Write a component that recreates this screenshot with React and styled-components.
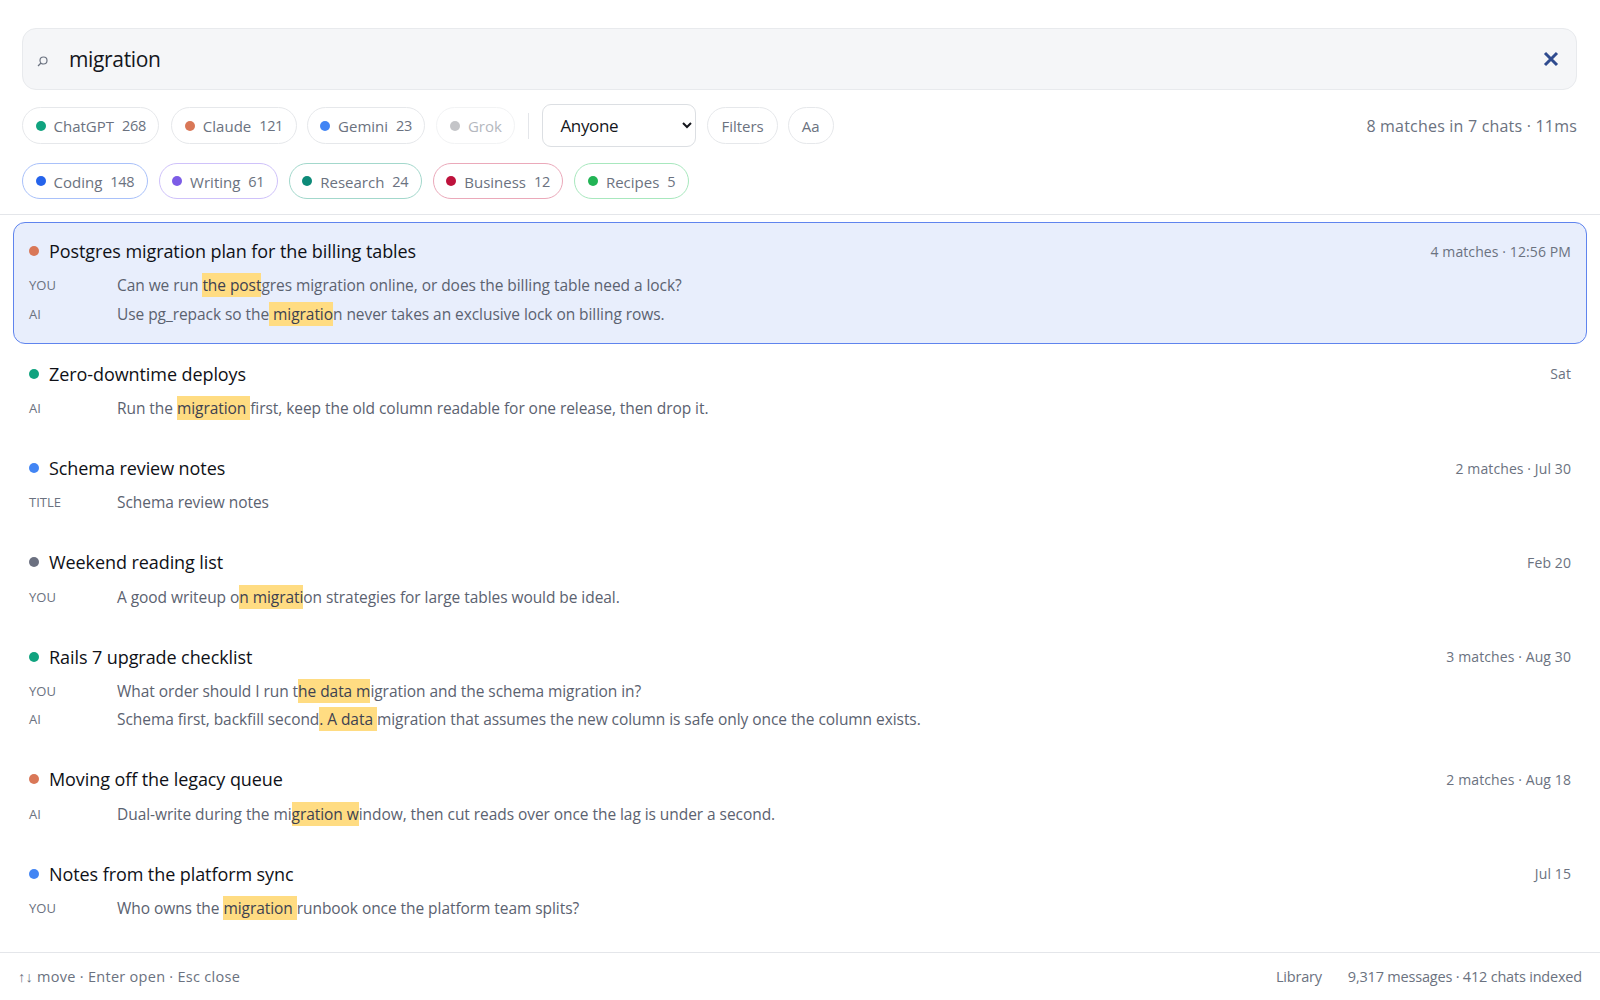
import React from 'react';
import styled, { createGlobalStyle } from 'styled-components';

const Global = createGlobalStyle`
  html, body { margin: 0; padding: 0; background: #fff; }
  body { font-family: "Open Sans", "Noto Sans", sans-serif; color: #14161c; }
`;

const Page = styled.div`
  display: flex;
  flex-direction: column;
  height: 1000px;
`;

const Header = styled.header`
  padding: 28px 23px 15px 22px;
  border-bottom: 1px solid #e4e6ea;
`;

const SearchBar = styled.div`
  display: flex;
  align-items: center;
  height: 62px;
  box-sizing: border-box;
  padding: 0 17px 0 13px;
  background: #f5f6f8;
  border: 1px solid #e8eaed;
  border-radius: 14px;
`;

const SearchInput = styled.input`
  flex: 1;
  margin-left: 17px;
  border: 0;
  outline: 0;
  background: transparent;
  font: 400 21px "Open Sans", sans-serif;
  letter-spacing: -0.35px;
  color: #14161c;
`;

const ClearButton = styled.button`
  display: flex;
  padding: 0;
  border: 0;
  background: none;
`;

const FilterRow = styled.div`
  display: flex;
  align-items: center;
  margin-top: 14px;
  height: 43px;
`;

const TagRow = styled.div`
  display: flex;
  align-items: center;
  gap: 11px;
  margin-top: 16px;
  height: 36px;
`;

const Chip = styled.button`
  display: inline-flex;
  align-items: center;
  height: ${p => (p.$tall ? 36 : 37)}px;
  box-sizing: border-box;
  padding: 0 ${p => (p.$plain ? 13 : 12.5)}px;
  margin-right: ${p => p.$gap ?? 0}px;
  background: #fff;
  border: 1px solid ${p => p.$border || '#e6e8eb'};
  border-radius: 19px;
  font: 400 15px "Open Sans", sans-serif;
  color: #6b7280;
  opacity: ${p => (p.$off ? 0.5 : 1)};
`;

const Dot = styled.span`
  width: 10px;
  height: 10px;
  flex: none;
  border-radius: 50%;
  background: ${p => p.$color};
`;

const ChipLabel = styled.span`
  margin-left: 8px;
  padding-top: ${p => (p.$low ? 2 : 0)}px;
`;

const ChipCount = styled.span`
  margin-left: 8px;
  font-size: 14.5px;
  letter-spacing: -0.35px;
`;

const Separator = styled.span`
  width: 1px;
  height: 26px;
  margin: 0 13px 0 13px;
  background: #e4e6ea;
`;

const Who = styled.select`
  width: 154px;
  height: 43px;
  margin-right: 11px;
  padding: 0 0 0 13px;
  background: #fff;
  border: 1px solid #dcdfe3;
  border-radius: 9px;
  font: 400 17px "Open Sans", sans-serif;
  letter-spacing: -0.35px;
  color: #14161c;
`;

const Stats = styled.span`
  margin-left: auto;
  font-size: 16px;
  letter-spacing: 0.2px;
  color: #6b7280;
`;

const Results = styled.main`
  flex: 1;
  display: flex;
  flex-direction: column;
  gap: 1.8px;
  padding: 7px 13px 0;
`;

const Row = styled.article`
  padding: 15px 15px ${p => (p.$active ? 15 : 14)}px;
  margin-bottom: ${p => (p.$active ? -1 : 0)}px;
  background: ${p => (p.$active ? '#e8eefc' : 'transparent')};
  border: 1px solid ${p => (p.$active ? '#5f84ee' : 'transparent')};
  border-radius: 12px;
`;

const RowHead = styled.div`
  display: flex;
  align-items: center;
  height: 26px;
  margin-bottom: 7px;
`;

const Title = styled.h3`
  margin: 0 0 0 10px;
  font-size: 18px;
  font-weight: 500;
  letter-spacing: -0.08px;
  color: #0f1117;
`;

const Meta = styled.span`
  margin-left: auto;
  font-size: 14px;
  letter-spacing: 0.1px;
  color: #6b7280;
`;

const Line = styled.div`
  display: flex;
  align-items: center;
  height: 28.5px;
`;

const Role = styled.span`
  width: 88px;
  flex: none;
  font-size: 13px;
  color: #6b7280;
`;

const Snippet = styled.span`
  font-size: 15.5px;
  letter-spacing: -0.06px;
  color: #5b6270;
  white-space: pre;
`;

const Mark = styled.mark`
  padding: 1px 0;
  background: #ffdc82;
  color: #3d4150;
`;

const Footer = styled.footer`
  display: flex;
  align-items: center;
  height: 47px;
  padding: 0 18px 0 18px;
  border-top: 1px solid #e4e6ea;
  font-size: 14.5px;
  letter-spacing: 0.28px;
  color: #6b7280;
`;

const FooterRight = styled.span`
  margin-left: auto;
  display: flex;
  gap: 26px;
  letter-spacing: -0.2px;
`;

const SearchIcon = () => (
  <svg width="14" height="14" viewBox="0 0 14 14" fill="none" stroke="#6b7280" strokeWidth="1.2" style={{ marginTop: 3 }}>
    <circle cx="7.5" cy="6.5" r="3.5" />
    <path d="M5 9 2 12" />
  </svg>
);

const CloseIcon = () => (
  <svg width="16" height="16" viewBox="0 0 16 16" fill="none" stroke="#2f4b8f" strokeWidth="3">
    <path d="M2 2 14 14M14 2 2 14" />
  </svg>
);

const sources = [
  { name: 'ChatGPT', count: 268, color: '#10a37f', gap: 12 },
  { name: 'Claude', count: 121, color: '#d97757', gap: 10 },
  { name: 'Gemini', count: 23, color: '#4285f4', gap: 11 },
  { name: 'Grok', color: '#8a8d93', off: true },
];

const tags = [
  { name: 'Coding', count: 148, color: '#2563eb', border: '#a9c1fa' },
  { name: 'Writing', count: 61, color: '#7c5ce6', border: '#cfc2fa' },
  { name: 'Research', count: 24, color: '#0d8a78', border: '#a3d8cc' },
  { name: 'Business', count: 12, color: '#be123c', border: '#eba9ba' },
  { name: 'Recipes', count: 5, color: '#22b455', border: '#a8e8be' },
];

const results = [
  {
    dot: '#d97757', title: 'Postgres migration plan for the billing tables', meta: '4 matches · 12:56 PM', active: true,
    lines: [
      ['YOU', 'Can we run ', 'the post', 'gres migration online, or does the billing table need a lock?'],
      ['AI', 'Use pg_repack so the', ' migratio', 'n never takes an exclusive lock on billing rows.'],
    ],
  },
  {
    dot: '#10a37f', title: 'Zero-downtime deploys', meta: 'Sat',
    lines: [['AI', 'Run the ', 'migration ', 'first, keep the old column readable for one release, then drop it.']],
  },
  {
    dot: '#4285f4', title: 'Schema review notes', meta: '2 matches · Jul 30',
    lines: [['TITLE', 'Schema review notes', '', '']],
  },
  {
    dot: '#6b7080', title: 'Weekend reading list', meta: 'Feb 20',
    lines: [['YOU', 'A good writeup o', 'n migrati', 'on strategies for large tables would be ideal.']],
  },
  {
    dot: '#10a37f', title: 'Rails 7 upgrade checklist', meta: '3 matches · Aug 30',
    lines: [
      ['YOU', 'What order should I run t', 'he data m', 'igration and the schema migration in?'],
      ['AI', 'Schema first, backfill second', '. A data ', 'migration that assumes the new column is safe only once the column exists.'],
    ],
  },
  {
    dot: '#d97757', title: 'Moving off the legacy queue', meta: '2 matches · Aug 18',
    lines: [['AI', 'Dual-write during the mi', 'gration w', 'indow, then cut reads over once the lag is under a second.']],
  },
  {
    dot: '#4285f4', title: 'Notes from the platform sync', meta: 'Jul 15',
    lines: [['YOU', 'Who owns the ', 'migration ', 'runbook once the platform team splits?']],
  },
];

export default function App() {
  return (
    <Page>
      <Global />
      <Header>
        <SearchBar>
          <SearchIcon />
          <SearchInput defaultValue="migration" />
          <ClearButton aria-label="Clear"><CloseIcon /></ClearButton>
        </SearchBar>
        <FilterRow>
          {sources.map(s => (
            <Chip key={s.name} $gap={s.gap} $off={s.off}>
              <Dot $color={s.color} />
              <ChipLabel>{s.name}</ChipLabel>
              {s.count && <ChipCount>{s.count}</ChipCount>}
            </Chip>
          ))}
          <Separator />
          <Who defaultValue="Anyone">
            <option>Anyone</option>
            <option>You</option>
            <option>AI</option>
          </Who>
          <Chip $plain $gap={10}>Filters</Chip>
          <Chip $plain>Aa</Chip>
          <Stats>8 matches in 7 chats · 11ms</Stats>
        </FilterRow>
        <TagRow>
          {tags.map(t => (
            <Chip key={t.name} $tall $border={t.border}>
              <Dot $color={t.color} />
              <ChipLabel $low>{t.name}</ChipLabel>
              <ChipCount>{t.count}</ChipCount>
            </Chip>
          ))}
        </TagRow>
      </Header>
      <Results>
        {results.map(r => (
          <Row key={r.title} $active={r.active}>
            <RowHead>
              <Dot $color={r.dot} />
              <Title>{r.title}</Title>
              <Meta>{r.meta}</Meta>
            </RowHead>
            {r.lines.map(([role, before, hit, after]) => (
              <Line key={role}>
                <Role>{role}</Role>
                <Snippet>{before}{hit && <Mark>{hit}</Mark>}{after}</Snippet>
              </Line>
            ))}
          </Row>
        ))}
      </Results>
      <Footer>
        <span>↑↓ move · Enter open · Esc close</span>
        <FooterRight>
          <span>Library</span>
          <span>9,317 messages · 412 chats indexed</span>
        </FooterRight>
      </Footer>
    </Page>
  );
}
